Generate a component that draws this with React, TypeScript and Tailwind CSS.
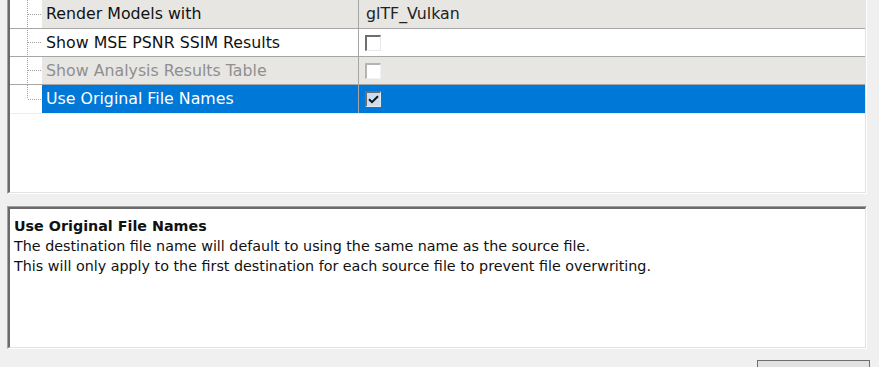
import React from "react";

type Row = {
  label: string;
  kind: "text" | "check";
  value?: string;
  checked?: boolean;
  disabled?: boolean;
  selected?: boolean;
  bg: "gray" | "white";
  h: string;
  last?: boolean;
};

const rows: Row[] = [
  { label: "Render Models with", kind: "text", value: "glTF_Vulkan", bg: "gray", h: "h-[29px]" },
  { label: "Show MSE PSNR SSIM Results", kind: "check", checked: false, bg: "white", h: "h-[28px]" },
  { label: "Show Analysis Results Table", kind: "check", checked: false, disabled: true, bg: "gray", h: "h-[28px]" },
  { label: "Use Original File Names", kind: "check", checked: true, selected: true, bg: "gray", h: "h-[28px]", last: true },
];

function Tree({ last }: { last?: boolean }) {
  return (
    <svg width="32" height="28" className="block" viewBox="0 0 32 28">
      <line
        x1="17.5"
        y1="0"
        x2="17.5"
        y2={last ? 14 : 28}
        stroke="#a0a0a0"
        strokeWidth="1"
        strokeDasharray="1 1"
      />
      <line x1="18" y1="14.5" x2="32" y2="14.5" stroke="#a0a0a0" strokeWidth="1" strokeDasharray="1 1" />
    </svg>
  );
}

function Check({ checked, disabled }: { checked?: boolean; disabled?: boolean }) {
  const edge = disabled
    ? "border-t-2 border-l-2 border-t-[#b4b4b4] border-l-[#b4b4b4] border-b border-r border-b-[#f2f2f2] border-r-[#f2f2f2]"
    : "border-t-2 border-l-2 border-t-[#6e6e6e] border-l-[#6e6e6e] border-b border-r border-b-[#e8e8e8] border-r-[#e8e8e8]";
  return (
    <div
      className={`w-[16px] h-[16px] box-border flex items-center justify-center ${edge} ${
        checked ? "bg-[#c9def5]" : "bg-white"
      }`}
    >
      {checked && (
        <svg width="11" height="9" viewBox="0 0 11 9">
          <path d="M1 4.2 L4 7.2 L10 1.2" stroke="#111" strokeWidth="2" fill="none" />
        </svg>
      )}
    </div>
  );
}

export default function App() {
  return (
    <div
      className="w-[879px] h-[367px] bg-[#f0f0f0] overflow-hidden flex flex-col"
      style={{ fontFamily: '"DejaVu Sans", Verdana, sans-serif' }}
    >
      {/* Property grid */}
      <div className="shrink-0 ml-[7px] w-[860px] h-[194px] box-border border-l border-l-[#a0a0a0] border-b border-b-white border-r border-r-white">
        <div className="h-full box-border border-l-2 border-l-[#6a6a6a] border-b border-b-[#e3e3e3] border-r border-r-[#e3e3e3] bg-white flex flex-col">
          {rows.map((r, i) => (
            <div
              key={i}
              className={`shrink-0 flex ${r.h} box-border ${r.last ? "" : "border-b border-b-[#a6a6a6]"}`}
            >
              <div className="w-[32px] bg-white flex items-end">
                <Tree last={r.last} />
              </div>
              <div
                className={`w-[316px] flex items-center pl-[4px] text-[15.8px] whitespace-nowrap ${
                  r.selected
                    ? "bg-[#0078d7] text-white"
                    : r.bg === "gray"
                    ? "bg-[#e7e6e3]"
                    : "bg-white"
                } ${r.disabled ? "text-[#8f8f8f]" : r.selected ? "" : "text-[#111]"}`}
              >
                {r.label}
              </div>
              <div
                className={`flex-1 flex items-center border-l border-l-[#a6a6a6] pl-[6px] text-[15.8px] whitespace-nowrap text-[#222] ${
                  r.selected ? "bg-[#0078d7]" : r.bg === "gray" ? "bg-[#e7e6e3]" : "bg-white"
                }`}
              >
                {r.kind === "text" ? (
                  <span className="pl-[1px]">{r.value}</span>
                ) : (
                  <Check checked={r.checked} disabled={r.disabled} />
                )}
              </div>
            </div>
          ))}
          <div className="flex-1 border-t border-t-[#ececec] bg-white" />
        </div>
      </div>

      {/* Description panel */}
      <div className="shrink-0 mt-[12px] ml-[7px] w-[860px] h-[143px] box-border border-l border-t border-l-[#a0a0a0] border-t-[#a0a0a0] border-b border-r border-b-white border-r-white">
        <div className="h-full box-border border-l-2 border-t-2 border-l-[#6a6a6a] border-t-[#6a6a6a] border-b border-r border-b-[#e3e3e3] border-r-[#e3e3e3] bg-white pl-[4px] pt-[7px] text-[14.3px] leading-[20px] text-[#111]">
          <div className="font-bold">Use Original File Names</div>
          <div>The destination file name will default to using the same name as the source file.</div>
          <div>This will only apply to the first destination for each source file to prevent file overwriting.</div>
        </div>
      </div>

      {/* Button row */}
      <div className="shrink-0 flex justify-end pr-[9px] pt-[11px]">
        <div className="w-[113px] h-[30px] box-border border border-[#6e6e6e] bg-[#e1e1e1]" />
      </div>
    </div>
  );
}
